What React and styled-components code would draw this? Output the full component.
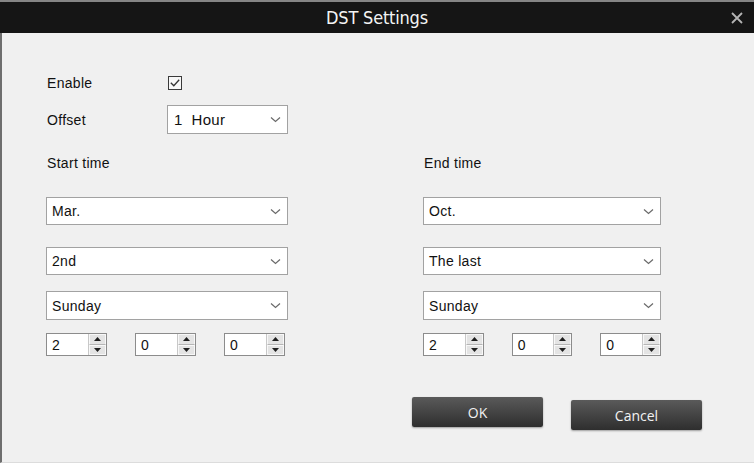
import React from "react";
import styled, { createGlobalStyle } from "styled-components";

const GlobalStyle = createGlobalStyle`
  html, body {
    margin: 0;
    padding: 0;
    background: #f0f0f0;
    overflow: hidden;
  }
  * {
    box-sizing: border-box;
  }
`;

const Dialog = styled.div`
  width: 754px;
  height: 463px;
  display: flex;
  flex-direction: column;
  background: #f0f0f0;
  border-left: 2px solid #6e6e6e;
  border-bottom: 1px solid #dcdcdc;
  font-family: "Liberation Sans", Arial, sans-serif;
  color: #111;
`;

const TitleBar = styled.div`
  height: 33px;
  flex: none;
  display: grid;
  grid-template-columns: 1fr auto 1fr;
  align-items: center;
  background: #151515;
  border-top: 2px solid #858585;
  margin-left: -2px;
`;

const Title = styled.div`
  grid-column: 2;
  font-family: "DejaVu Sans", sans-serif;
  font-stretch: condensed;
  font-size: 18px;
  color: #f4f4f4;
  letter-spacing: -0.2px;
`;

const Close = styled.div`
  grid-column: 3;
  justify-self: end;
  margin-right: 10px;
  width: 14px;
  height: 14px;
  display: flex;
  align-items: center;
  justify-content: center;
`;

const Body = styled.div`
  flex: 1;
  display: flex;
  flex-direction: column;
  padding: 42px 0 0 44px;
`;

const FieldRow = styled.div`
  display: grid;
  grid-template-columns: 121px auto;
  align-items: center;
  height: ${({ $h }) => $h}px;
  margin-top: ${({ $mt }) => $mt || 0}px;
`;

const Label = styled.span`
  font-size: 14px;
  letter-spacing: 0.3px;
  padding-left: 1px;
`;

const Checkbox = styled.div`
  width: 14px;
  height: 14px;
  margin-left: 1px;
  border: 1px solid #3a3a3a;
  background: #f7f7f7;
  display: flex;
  align-items: center;
  justify-content: center;
`;

const Columns = styled.div`
  display: grid;
  grid-template-columns: 242px 238px;
  column-gap: 135px;
  margin-top: 19px;
`;

const Column = styled.div`
  display: flex;
  flex-direction: column;
`;

const Heading = styled.div`
  height: 20px;
  line-height: 20px;
  font-size: 14px;
  letter-spacing: 0.3px;
  padding-left: 1px;
  margin-bottom: 24px;
`;

const Select = styled.div`
  height: ${({ $h }) => $h || 28}px;
  width: ${({ $w }) => ($w ? `${$w}px` : "100%")};
  margin-top: ${({ $mt }) => $mt || 0}px;
  background: #fff;
  border: 1px solid #a2a2a2;
  display: flex;
  align-items: center;
  justify-content: space-between;
  padding: 0 6px 0 ${({ $pl }) => $pl || 5}px;
  font-size: ${({ $fs }) => $fs || 14}px;
  letter-spacing: 0.3px;
`;

const SpinRow = styled.div`
  display: flex;
  gap: 28px;
  margin-top: 13px;
`;

const Spin = styled.div`
  width: 61px;
  height: 23px;
  background: #fff;
  border: 1px solid #8c8c8c;
  display: flex;
  align-items: center;
  justify-content: space-between;
  padding-left: 5px;
  font-size: 14px;
`;

const SpinButtons = styled.div`
  width: 18px;
  height: 100%;
  display: flex;
  flex-direction: column;
  border-left: 1px solid #c8c8c8;
`;

const SpinHalf = styled.div`
  flex: 1;
  background: #e4e4e4;
  border: 1px solid #f8f8f8;
  border-bottom-color: ${({ $down }) => ($down ? "#f8f8f8" : "#b5b5b5")};
  display: flex;
  align-items: center;
  justify-content: center;
`;

const Actions = styled.div`
  display: flex;
  justify-content: flex-end;
  align-items: flex-start;
  gap: 28px;
  padding-right: 52px;
  margin-top: 41px;
`;

const Button = styled.div`
  width: 131px;
  height: 30px;
  margin-top: ${({ $mt }) => $mt || 0}px;
  border-radius: 2px;
  background: linear-gradient(#5a5a5a, #2e2e2e);
  box-shadow: 0 1px 2px rgba(0, 0, 0, 0.35);
  color: #f2f2f2;
  font-family: "Open Sans", "Noto Sans", sans-serif;
  font-size: 14px;
  display: flex;
  align-items: center;
  justify-content: center;
`;

const Chevron = () => (
  <svg width="11" height="7" viewBox="0 0 11 7">
    <path d="M1 1.5 L5.5 5.5 L10 1.5" fill="none" stroke="#6a6a6a" strokeWidth="1.2" />
  </svg>
);

const Arrow = ({ down }) => (
  <svg width="7" height="4" viewBox="0 0 7 4">
    <path d={down ? "M0 0 H7 L3.5 4 Z" : "M0 4 H7 L3.5 0 Z"} fill="#1e1e1e" />
  </svg>
);

const Spinner = ({ value }) => (
  <Spin>
    <span>{value}</span>
    <SpinButtons>
      <SpinHalf>
        <Arrow />
      </SpinHalf>
      <SpinHalf $down>
        <Arrow down />
      </SpinHalf>
    </SpinButtons>
  </Spin>
);

const Dropdown = ({ children, ...rest }) => (
  <Select {...rest}>
    <span>{children}</span>
    <Chevron />
  </Select>
);

const TimeColumn = ({ title, month, week, day, times }) => (
  <Column>
    <Heading>{title}</Heading>
    <Dropdown>{month}</Dropdown>
    <Dropdown $mt={22}>{week}</Dropdown>
    <Dropdown $mt={16} $h={29}>
      {day}
    </Dropdown>
    <SpinRow>
      {times.map((t, i) => (
        <Spinner key={i} value={t} />
      ))}
    </SpinRow>
  </Column>
);

export default function App() {
  return (
    <>
      <GlobalStyle />
      <Dialog>
        <TitleBar>
          <Title>DST Settings</Title>
          <Close>
            <svg width="12" height="12" viewBox="0 0 12 12">
              <path d="M1 1 L11 11 M11 1 L1 11" stroke="#b4b4b4" strokeWidth="1.8" />
            </svg>
          </Close>
        </TitleBar>
        <Body>
          <FieldRow $h={14}>
            <Label>Enable</Label>
            <Checkbox>
              <svg width="10" height="8" viewBox="0 0 10 8">
                <path d="M0.8 3.8 L3.8 6.8 L9.2 0.8" fill="none" stroke="#333" strokeWidth="1.3" />
              </svg>
            </Checkbox>
          </FieldRow>
          <FieldRow $h={29} $mt={16}>
            <Label>Offset</Label>
            <Dropdown $w={121} $h={29} $fs={15} $pl={6}>
              1&nbsp;&nbsp;Hour
            </Dropdown>
          </FieldRow>
          <Columns>
            <TimeColumn title="Start time" month="Mar." week="2nd" day="Sunday" times={[2, 0, 0]} />
            <TimeColumn title="End time" month="Oct." week="The last" day="Sunday" times={[2, 0, 0]} />
          </Columns>
          <Actions>
            <Button>OK</Button>
            <Button $mt={3}>Cancel</Button>
          </Actions>
        </Body>
      </Dialog>
    </>
  );
}
